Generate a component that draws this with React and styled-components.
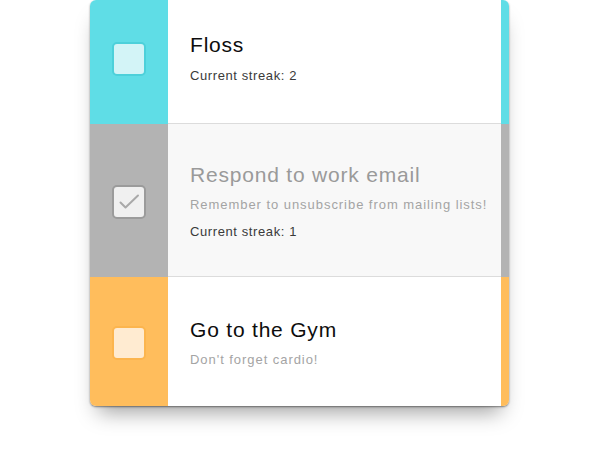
import React from "react";
import styled, { createGlobalStyle } from "styled-components";

const Global = createGlobalStyle`
  html, body { margin: 0; padding: 0; background: #fff; }
  body { font-family: "Liberation Sans", Arial, sans-serif; -webkit-font-smoothing: antialiased; }
`;

const Page = styled.div`
  width: 599px;
  height: 462px;
  padding-left: 90px;
  box-sizing: border-box;
`;

const Card = styled.div`
  width: 419px;
  border-radius: 6px;
  overflow: hidden;
  display: flex;
  flex-direction: column;
  box-shadow: 0 1px 2px rgba(0, 0, 0, 0.45), 0 14px 20px -8px rgba(0, 0, 0, 0.38);
`;

const Row = styled.div`
  display: flex;
  align-items: stretch;
`;

const Side = styled.div`
  width: 78px;
  flex: none;
  background: ${(p) => p.$color};
  display: flex;
  align-items: center;
  justify-content: center;
  padding: ${(p) => p.$pad};
  box-sizing: border-box;
`;

const Box = styled.div`
  width: 34px;
  height: 34px;
  box-sizing: border-box;
  border-radius: 5px;
  border: 2px solid ${(p) => p.$border};
  background: ${(p) => p.$fill};
  display: flex;
  align-items: center;
  justify-content: center;
`;

const Body = styled.div`
  flex: 1;
  background: ${(p) => (p.$muted ? "#f8f8f8" : "#fff")};
  border-bottom: ${(p) => (p.$last ? "none" : "1px solid #dcdcdc")};
  padding: ${(p) => p.$pad};
  padding-left: 22px;
  display: flex;
  flex-direction: column;
  gap: 10px;
`;

const Strip = styled.div`
  width: 8px;
  flex: none;
  background: ${(p) => p.$color};
`;

const Title = styled.div`
  font-size: 21px;
  line-height: 24px;
  letter-spacing: 0.8px;
  color: ${(p) => (p.$muted ? "#9a9a9a" : "#0d0d0d")};
`;

const Note = styled.div`
  font-size: 13px;
  line-height: 16px;
  letter-spacing: 0.95px;
  color: #a4a4a4;
`;

const Streak = styled.div`
  font-size: 13px;
  line-height: 16px;
  letter-spacing: 0.6px;
  color: #3a3a3a;
  margin-top: 1px;
`;

const Check = () => (
  <svg width="24" height="18" viewBox="0 0 24 18">
    <polyline points="3.5,9.5 8.5,14.5 21,2.5" fill="none" stroke="#a9a9a9" strokeWidth="2" strokeLinecap="round" strokeLinejoin="round" />
  </svg>
);

const items = [
  {
    title: "Floss",
    streak: "Current streak: 2",
    color: "#5fdde6",
    fill: "#d3f4f7",
    border: "#4dd0da",
    pad: "33px 0 39px",
  },
  {
    title: "Respond to work email",
    note: "Remember to unsubscribe from mailing lists!",
    streak: "Current streak: 1",
    color: "#b3b3b3",
    fill: "#f0f0f0",
    border: "#9b9b9b",
    muted: true,
    done: true,
    pad: "39px 0 36px",
  },
  {
    title: "Go to the Gym",
    note: "Don't forget cardio!",
    color: "#ffbd5c",
    fill: "#ffebd1",
    border: "#fcb54e",
    pad: "41px 0 38px",
    last: true,
  },
];

export default function App() {
  return (
    <>
      <Global />
      <Page>
        <Card>
          {items.map((it) => (
            <Row key={it.title}>
              <Side $color={it.color} $pad={it.pad}>
                <Box $fill={it.fill} $border={it.border}>
                  {it.done && <Check />}
                </Box>
              </Side>
              <Body $muted={it.muted} $last={it.last} $pad={it.pad}>
                <Title $muted={it.muted}>{it.title}</Title>
                {it.note && <Note>{it.note}</Note>}
                {it.streak && <Streak>{it.streak}</Streak>}
              </Body>
              <Strip $color={it.color} />
            </Row>
          ))}
        </Card>
      </Page>
    </>
  );
}
